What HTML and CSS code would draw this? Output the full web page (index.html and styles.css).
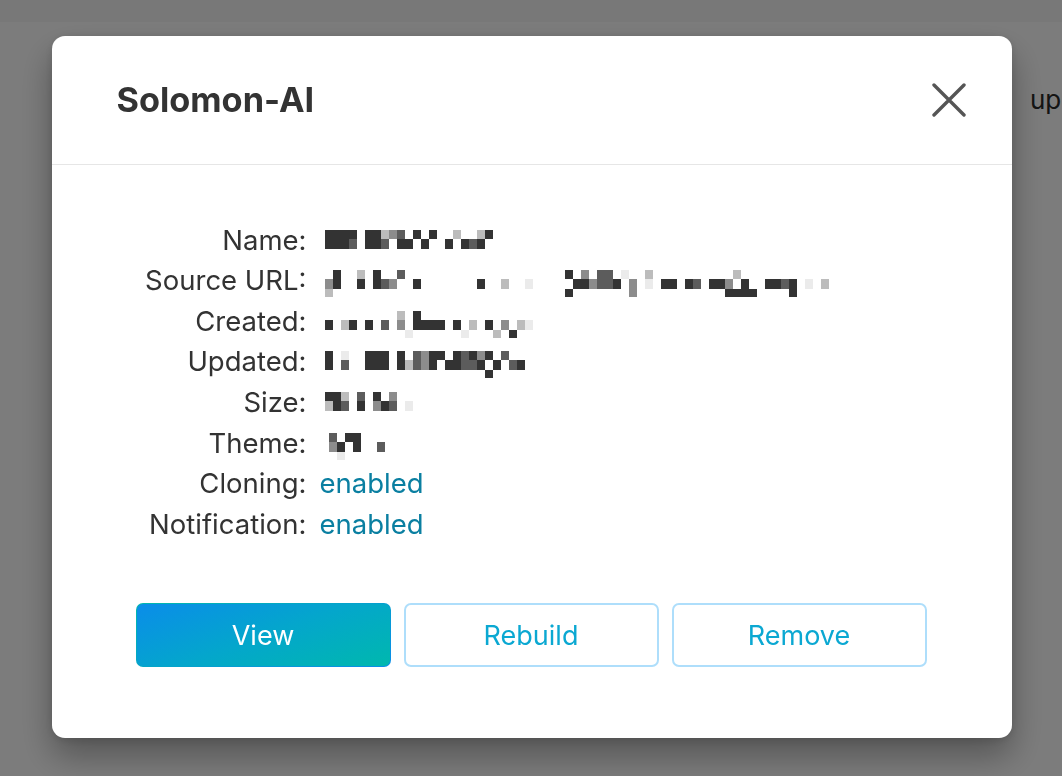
FILE: index.html
```html
<!DOCTYPE html>
<html lang="en">
<head>
<meta charset="utf-8">
<title>Solomon-AI</title>
<link rel="stylesheet" href="styles.css">
</head>
<body>
<div class="page">
  <div class="topbar"></div>
  <main class="page-main">
    <p class="page-text">up</p>
  </main>
</div>
<div class="overlay">
  <div class="modal" role="dialog" aria-labelledby="modal-title">
    <header class="modal-header">
      <h2 class="modal-title" id="modal-title">Solomon-AI</h2>
      <button class="close-btn" type="button" aria-label="Close">
        <svg width="34" height="34" viewBox="0 0 34 34" aria-hidden="true">
          <path d="M2 2 L32 32 M32 2 L2 32" fill="none" stroke="currentColor" stroke-width="3.4" stroke-linecap="round"/>
        </svg>
      </button>
    </header>
    <div class="modal-body">
      <div class="info">
        <div class="info-label">Name:</div>
        <div class="info-value"><span class="mosaic" data-top="1111 11432 1 1  4  41" data-mid="1112 112 11 1  1 121" data-bot="                    "></span></div>
        <div class="info-label">Source URL:</div>
        <div class="info-value"><span class="mosaic" data-top=" 1  4 1  2                    1 3 22 5  4          4       " data-mid="31  1 123  1       1  4  5     113221 3 5 11 12 113 1  1121 5 4" data-bot="4                             1       3           1111    1  "></span></div>
        <div class="info-label">Created:</div>
        <div class="info-value"><span class="mosaic" data-top="         4 1              " data-mid="1 41 1 2 3 1111 1 4 1 3 45" data-bot="          5      5   4 1 "></span></div>
        <div class="info-label">Updated:</div>
        <div class="info-value"><span class="mosaic" data-top="1 5  111 1 2311 12131 2   " data-mid="1 2  111 14231 11221 1 21" data-bot="                    1    "></span></div>
        <div class="info-label">Size:</div>
        <div class="info-value"><span class="mosaic" data-top="114 2 1 3  " data-mid="412 1 312 5" data-bot="           "></span></div>
        <div class="info-label">Theme:</div>
        <div class="info-value"><span class="mosaic mosaic-indent" data-top="2 11   " data-mid="31 1  2" data-bot=" 5     "></span></div>
        <div class="info-label">Cloning:</div>
        <div class="info-value"><a class="link" href="#">enabled</a></div>
        <div class="info-label">Notification:</div>
        <div class="info-value"><a class="link" href="#">enabled</a></div>
      </div>
      <div class="actions">
        <button class="btn btn-primary" type="button">View</button>
        <button class="btn btn-outline" type="button">Rebuild</button>
        <button class="btn btn-outline" type="button">Remove</button>
      </div>
    </div>
  </div>
</div>
<script src="script.js"></script>
</body>
</html>
```

FILE: styles.css
```css
html, body {
  margin: 0;
  padding: 0;
  height: 100%;
  overflow: hidden;
}
body {
  font-family: Inter, "Noto Sans", "Liberation Sans", sans-serif;
  background: #ffffff;
  color: #333333;
}
.page {
  height: 100%;
}
.topbar {
  height: 22px;
  background: #f6f6f6;
}
.page-main {
  padding: 62px 0 0 1030px;
}
.page-text {
  margin: 0;
  font-size: 26px;
  white-space: nowrap;
  color: #2a2a2a;
}
.overlay {
  position: fixed;
  inset: 0;
  background: rgba(0, 0, 0, 0.515);
  display: flex;
  align-items: center;
  justify-content: center;
  padding-bottom: 2px;
}
.modal {
  width: 960px;
  background: #ffffff;
  border-radius: 13px;
  box-shadow: 0 18px 34px rgba(0, 0, 0, 0.32), 0 2px 10px rgba(0, 0, 0, 0.12);
  overflow: hidden;
  margin-left: 1px;
}
.modal-header {
  height: 128px;
  border-bottom: 1px solid #e6e6e6;
  display: flex;
  align-items: center;
  justify-content: space-between;
  padding: 0 46px 0 65px;
}
.modal-title {
  margin: 0;
  font-size: 34.3px;
  font-weight: 700;
  color: #333333;
  letter-spacing: 0;
}
.close-btn {
  border: 0;
  background: none;
  padding: 0;
  width: 34px;
  height: 34px;
  color: #555555;
  display: flex;
  cursor: pointer;
}
.modal-body {
  padding: 55px 85px 71px 84px;
}
.info {
  display: grid;
  grid-template-columns: 171px 1fr;
  column-gap: 13px;
  font-size: 27.5px;
  line-height: 40.6px;
}
.info-label {
  text-align: right;
  color: #333333;
  white-space: nowrap;
}
.info-value {
  display: flex;
  align-items: flex-start;
  min-height: 40.6px;
}
.link {
  color: #0a7fa1;
  text-decoration: none;
}
.mosaic {
  display: grid;
  grid-template-rows: 9px 10px 8px;
  grid-auto-flow: column;
  grid-auto-columns: 8px;
  margin-top: 10px;
  margin-left: 5px;
}
.mosaic-indent {
  margin-left: 9px;
}
.px { display: block; }
.px-1 { background: #333333; }
.px-2 { background: #5c5c5c; }
.px-3 { background: #8c8c8c; }
.px-4 { background: #bcbcbc; }
.px-5 { background: #ebebeb; }
.actions {
  margin-top: 59px;
  display: grid;
  grid-template-columns: repeat(3, 1fr);
  column-gap: 13px;
}
.btn {
  height: 64px;
  border-radius: 7px;
  font-family: Inter, "Noto Sans", "Liberation Sans", sans-serif;
  font-size: 27px;
  cursor: pointer;
}
.btn-primary {
  color: #ffffff;
  border: 1px solid transparent;
  background:
    linear-gradient(160deg, #0a8de9 0%, #04a6cc 50%, #00b8ae 100%) padding-box,
    linear-gradient(160deg, #00b8ae 0%, #0a8de9 100%) border-box;
}
.btn-outline {
  background: #ffffff;
  border: 2px solid #aedefb;
  color: #0ba8d2;
}
```

FILE: script.js
```js
document.querySelectorAll('.mosaic').forEach(function (el) {
  var rows = [el.dataset.top || '', el.dataset.mid || '', el.dataset.bot || ''];
  var n = Math.max(rows[0].length, rows[1].length, rows[2].length);
  for (var c = 0; c < n; c++) {
    for (var r = 0; r < 3; r++) {
      var ch = rows[r].charAt(c) || ' ';
      var cell = document.createElement('i');
      cell.className = 'px' + (ch === ' ' ? '' : ' px-' + ch);
      el.appendChild(cell);
    }
  }
});
```
